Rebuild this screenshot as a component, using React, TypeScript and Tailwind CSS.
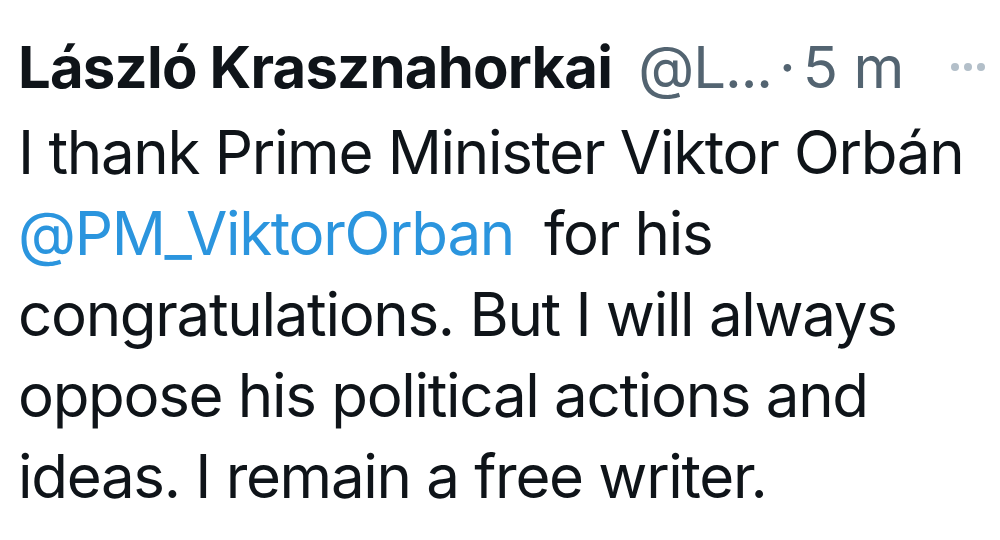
import React from "react";

const lines: React.ReactNode[] = [
  "I thank Prime Minister Viktor Orbán",
  <>
    <span className="text-[#2b95de]">@PM_ViktorOrban</span>
    <span className="ml-[30px]">for his</span>
  </>,
  "congratulations. But I will always",
  "oppose his political actions and",
  "ideas. I remain a free writer.",
];

export default function App() {
  return (
    <div className="w-[1000px] h-[540px] bg-white overflow-hidden font-['Inter',sans-serif] text-[#0f1419]">
      <div className="pl-[18px] pr-[14px] pt-[29px]">
        {/* header row */}
        <div className="flex items-baseline whitespace-nowrap leading-[76px]">
          <span className="text-[58px] font-bold tracking-[-0.8px]">László Krasznahorkai</span>
          <span className="ml-[26px] text-[58px] text-[#536471] tracking-[-1px]">@L...</span>
          <span className="mx-[7px] text-[58px] text-[#536471]">·</span>
          <span className="text-[58px] text-[#536471] tracking-[-0.5px]">5 m</span>
          <div className="ml-auto mr-[1px] flex gap-[5px] self-center">
            <span className="w-[8px] h-[8px] rounded-full bg-[#b3bfc9]" />
            <span className="w-[8px] h-[8px] rounded-full bg-[#b3bfc9]" />
            <span className="w-[8px] h-[8px] rounded-full bg-[#b3bfc9]" />
          </div>
        </div>

        {/* tweet body */}
        <div className="mt-[7px] text-[60px] leading-[81px] tracking-[-1.3px]">
          {lines.map((line, i) => (
            <div key={i} className="whitespace-nowrap">
              {line}
            </div>
          ))}
        </div>
      </div>
    </div>
  );
}
